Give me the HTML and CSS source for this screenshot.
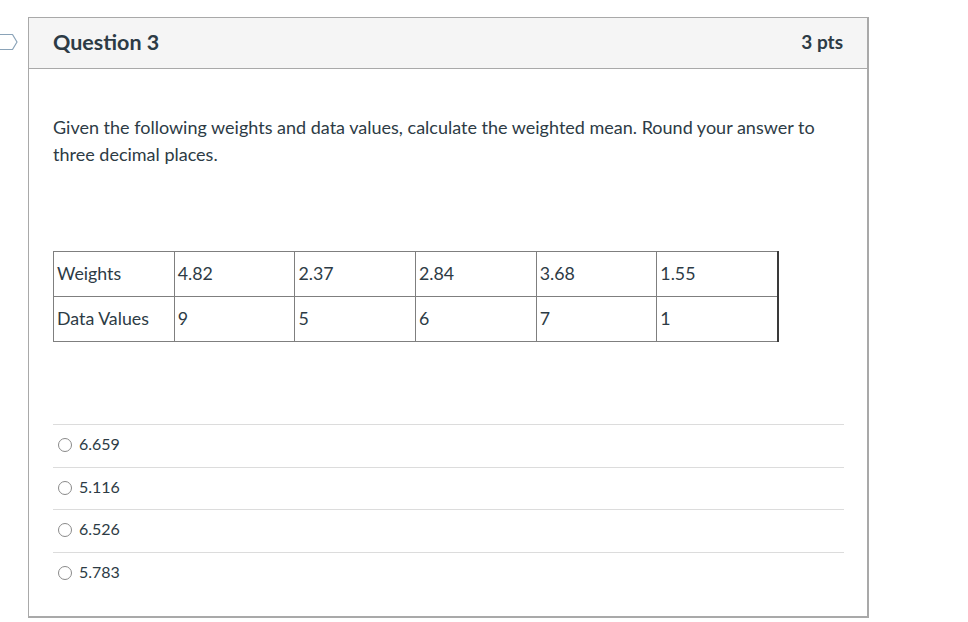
FILE: index.html
```html
<!DOCTYPE html>
<html>
<head>
<meta charset="utf-8">
<link rel="stylesheet" href="styles.css">
</head>
<body>
<div class="page">
  <svg class="marker" width="20" height="18" viewBox="0 0 20 18">
    <path d="M-2 1.5 H12.5 L17 9 L12.5 16.5 H-2" fill="#fff" stroke="#8aa3b8" stroke-width="1.2" stroke-linejoin="round"/>
  </svg>
  <div class="card">
    <div class="header">
      <div class="title">Question 3</div>
      <div class="pts">3 pts</div>
    </div>
    <div class="body">
      <p class="text">Given the following weights and data values, calculate the weighted mean. Round your answer to three decimal places.</p>
      <table class="data">
        <tr>
          <td>Weights</td><td>4.82</td><td>2.37</td><td>2.84</td><td>3.68</td><td>1.55</td>
        </tr>
        <tr>
          <td>Data Values</td><td>9</td><td>5</td><td>6</td><td>7</td><td>1</td>
        </tr>
      </table>
      <div class="answers">
        <div class="answer"><span class="radio"></span><span class="label">6.659</span></div>
        <div class="answer"><span class="radio"></span><span class="label">5.116</span></div>
        <div class="answer"><span class="radio"></span><span class="label">6.526</span></div>
        <div class="answer"><span class="radio"></span><span class="label">5.783</span></div>
      </div>
    </div>
  </div>
</div>
</body>
</html>
```

FILE: styles.css
```css
html, body {
  margin: 0;
  padding: 0;
  background: #fff;
}
body {
  font-family: Lato, "Open Sans", sans-serif;
  color: #2d3b45;
}
.page {
  position: relative;
  padding: 17px 0 0 28px;
}
.marker {
  position: absolute;
  left: 0;
  top: 33px;
}
.card {
  width: 838px;
  height: 598px;
  border: 1px solid #a9a9a9;
  border-bottom-width: 2px;
  border-right-width: 2px;
  box-sizing: content-box;
}
.header {
  height: 50px;
  background: #f5f5f5;
  border-bottom: 1px solid #a9a9a9;
  display: flex;
  align-items: center;
  justify-content: space-between;
  padding: 0 24px 0 24px;
}
.title {
  font-size: 21.5px;
  font-weight: 700;
  margin-top: -3px;
}
.pts {
  font-size: 19px;
  font-weight: 700;
  margin-top: -3px;
}
.body {
  padding: 0 23px 0 24px;
}
.text {
  font-size: 18px;
  line-height: 27px;
  margin: 45px 0 0 0;
}
.data {
  border-collapse: collapse;
  width: 726px;
  margin-top: 83px;
  font-size: 17.8px;
}
.data td {
  border: 1px solid #7f7f7f;
  height: 41px;
  padding: 0 3px 3px 3px;
  width: 114px;
  vertical-align: middle;
  line-height: 20px;
}
.data td:last-child {
  border-right: 2px solid #3a3a3a;
}
.answers {
  margin-top: 82px;
}
.answer {
  border-top: 1px solid #dcdcdc;
  height: 42px;
  display: flex;
  align-items: flex-start;
  padding: 8px 0 0 5px;
  box-sizing: border-box;
  font-size: 16px;
}
.answer:nth-child(odd) {
  height: 43px;
}
.radio {
  width: 12px;
  height: 12px;
  border: 1px solid #8a8a8a;
  border-radius: 50%;
  margin-right: 7px;
  margin-top: 5px;
}
.label {
  line-height: 22px;
}
```
